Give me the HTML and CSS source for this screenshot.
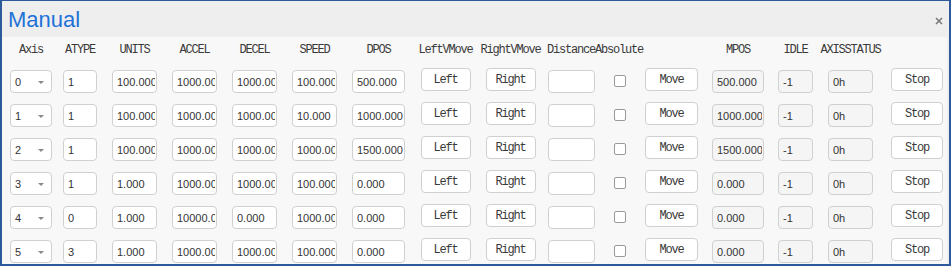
FILE: index.html
```html
<!DOCTYPE html>
<html lang="en">
<head>
  <meta charset="UTF-8" />
  <title>Manual</title>
  <link rel="stylesheet" href="styles.css">
</head>
<body>
  <div class="window">
    <div class="titlebar">
      <span class="title">Manual</span>
      <svg class="close" width="8" height="8" viewBox="0 0 8 8">
        <path d="M1 1L7 7M7 1L1 7" stroke="#7a7a7a" stroke-width="1.6" />
      </svg>
    </div>

    <div class="content">
      <div class="grid head">
        <span>Axis</span>
        <span>ATYPE</span>
        <span>UNITS</span>
        <span>ACCEL</span>
        <span>DECEL</span>
        <span>SPEED</span>
        <span>DPOS</span>
        <span>LeftVMove</span>
        <span>RightVMove</span>
        <span>Distance</span>
        <span>Absolute</span>
        <span></span>
        <span>MPOS</span>
        <span>IDLE</span>
        <span>AXISSTATUS</span>
        <span></span>
      </div>

      <div class="grid row">
        <div class="sel"><span>0</span><i class="caret"></i></div>
        <input class="w34" value="1">
        <input class="w45" value="100.000">
        <input class="w45" value="1000.000">
        <input class="w45" value="1000.000">
        <input class="w45" value="100.000">
        <input class="w53" value="500.000">
        <button class="w50">Left</button>
        <button class="w50">Right</button>
        <input class="w47" value="">
        <input type="checkbox" class="chk">
        <button class="w53">Move</button>
        <input class="w52 ro" value="500.000" readonly>
        <input class="w35 ro" value="-1" readonly>
        <input class="w45 ro" value="0h" readonly>
        <button class="w52">Stop</button>
      </div>

      <div class="grid row">
        <div class="sel"><span>1</span><i class="caret"></i></div>
        <input class="w34" value="1">
        <input class="w45" value="100.000">
        <input class="w45" value="1000.000">
        <input class="w45" value="1000.000">
        <input class="w45" value="10.000">
        <input class="w53" value="1000.000">
        <button class="w50">Left</button>
        <button class="w50">Right</button>
        <input class="w47" value="">
        <input type="checkbox" class="chk">
        <button class="w53">Move</button>
        <input class="w52 ro" value="1000.000" readonly>
        <input class="w35 ro" value="-1" readonly>
        <input class="w45 ro" value="0h" readonly>
        <button class="w52">Stop</button>
      </div>

      <div class="grid row">
        <div class="sel"><span>2</span><i class="caret"></i></div>
        <input class="w34" value="1">
        <input class="w45" value="100.000">
        <input class="w45" value="1000.000">
        <input class="w45" value="1000.000">
        <input class="w45" value="1000.000">
        <input class="w53" value="1500.000">
        <button class="w50">Left</button>
        <button class="w50">Right</button>
        <input class="w47" value="">
        <input type="checkbox" class="chk">
        <button class="w53">Move</button>
        <input class="w52 ro" value="1500.000" readonly>
        <input class="w35 ro" value="-1" readonly>
        <input class="w45 ro" value="0h" readonly>
        <button class="w52">Stop</button>
      </div>

      <div class="grid row">
        <div class="sel"><span>3</span><i class="caret"></i></div>
        <input class="w34" value="1">
        <input class="w45" value="1.000">
        <input class="w45" value="1000.000">
        <input class="w45" value="1000.000">
        <input class="w45" value="100.000">
        <input class="w53" value="0.000">
        <button class="w50">Left</button>
        <button class="w50">Right</button>
        <input class="w47" value="">
        <input type="checkbox" class="chk">
        <button class="w53">Move</button>
        <input class="w52 ro" value="0.000" readonly>
        <input class="w35 ro" value="-1" readonly>
        <input class="w45 ro" value="0h" readonly>
        <button class="w52">Stop</button>
      </div>

      <div class="grid row">
        <div class="sel"><span>4</span><i class="caret"></i></div>
        <input class="w34" value="0">
        <input class="w45" value="1.000">
        <input class="w45" value="10000.000">
        <input class="w45" value="0.000">
        <input class="w45" value="1000.000">
        <input class="w53" value="0.000">
        <button class="w50">Left</button>
        <button class="w50">Right</button>
        <input class="w47" value="">
        <input type="checkbox" class="chk">
        <button class="w53">Move</button>
        <input class="w52 ro" value="0.000" readonly>
        <input class="w35 ro" value="-1" readonly>
        <input class="w45 ro" value="0h" readonly>
        <button class="w52">Stop</button>
      </div>

      <div class="grid row">
        <div class="sel"><span>5</span><i class="caret"></i></div>
        <input class="w34" value="3">
        <input class="w45" value="1.000">
        <input class="w45" value="1000.000">
        <input class="w45" value="1000.000">
        <input class="w45" value="100.000">
        <input class="w53" value="0.000">
        <button class="w50">Left</button>
        <button class="w50">Right</button>
        <input class="w47" value="">
        <input type="checkbox" class="chk">
        <button class="w53">Move</button>
        <input class="w52 ro" value="0.000" readonly>
        <input class="w35 ro" value="-1" readonly>
        <input class="w45 ro" value="0h" readonly>
        <button class="w52">Stop</button>
      </div>
    </div>
  </div>
</body>
</html>
```

FILE: styles.css
```css
* {
  box-sizing: border-box;
}
body {
  margin: 0;
  background: #fff;
}
.window {
  width: 951px;
  height: 266px;
  border: 2px solid #2c5a9c;
  border-top-width: 1px;
  background: #eeeeee;
  overflow: hidden;
}
.titlebar {
  height: 36px;
  display: flex;
  align-items: center;
  justify-content: space-between;
  padding: 0 6px 0 6px;
}
.title {
  font-family: "Liberation Sans", Arial, sans-serif;
  font-size: 22px;
  color: #1e72d8;
  margin-top: 2px;
}
.close {
  margin-top: 4px;
}
.content {
  background: #f8f8f8;
  margin-right: 2px;
  height: 240px;
}
.grid {
  display: grid;
  grid-template-columns: 58px 40px 69px 51px 69px 51px 77px 57px 73px 48px 48px 57px 76px 39px 71px 62px;
  justify-items: center;
}
.head {
  height: 31px;
  padding-top: 3px;
  line-height: 20px;
  font-family: "Liberation Mono", "Courier New", monospace;
  font-size: 12px;
  letter-spacing: -1.2px;
  color: #3a3a3a;
  white-space: nowrap;
}
.row {
  height: 34px;
  align-items: start;
}
input, .sel {
  height: 23px;
  margin-top: 2px;
  border: 1px solid #d0d0d0;
  border-radius: 4px;
  background: #fff;
  padding: 0 1px 0 4px;
  font-family: "Liberation Sans", Tahoma, sans-serif;
  font-size: 11px;
  color: #333;
  outline: none;
}
input.ro {
  background: #f5f5f5;
}
.sel {
  width: 42px;
  display: flex;
  align-items: center;
  justify-content: space-between;
  padding: 1px 7px 0 4px;
}
.caret {
  width: 0;
  height: 0;
  border-left: 3px solid transparent;
  border-right: 3px solid transparent;
  border-top: 3px solid #8a8a8a;
}
button {
  height: 23px;
  border: 1px solid #d0d0d0;
  border-radius: 4px;
  background: #fff;
  padding: 0;
  font-family: "Liberation Mono", "Courier New", monospace;
  font-size: 12px;
  letter-spacing: -1.2px;
  color: #3a3a3a;
}
.chk {
  appearance: none;
  width: 12px;
  height: 12px;
  margin-top: 7px;
  padding: 0;
  border: 1px solid #9a9a9a;
  border-radius: 2px;
  background: #fff;
}
.w34 { width: 34px; }
.w35 { width: 35px; }
.w45 { width: 45px; }
.w47 { width: 47px; }
.w50 { width: 50px; }
.w52 { width: 52px; }
.w53 { width: 53px; }
```
